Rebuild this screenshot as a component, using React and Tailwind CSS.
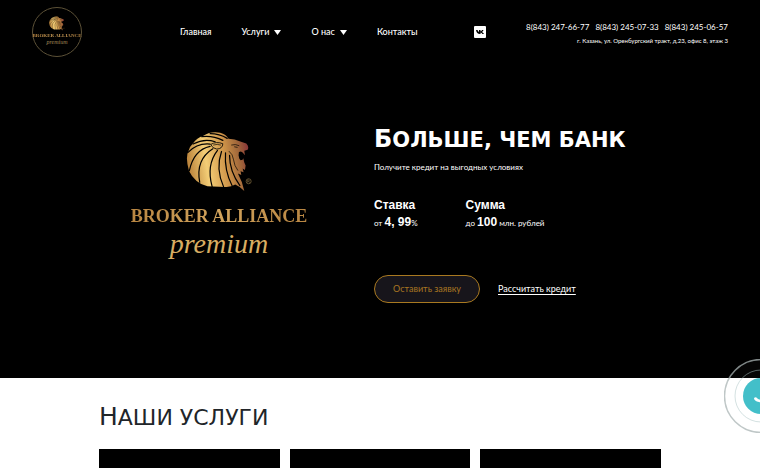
import React from 'react';

function Lion({ className, id }) {
  return (
    <svg className={className} viewBox="16 18 200 182" aria-hidden="true">
      <defs>
        <linearGradient id={id} x1="16" y1="120" x2="204" y2="90" gradientUnits="userSpaceOnUse">
          <stop offset="0" stopColor="#b47b35" />
          <stop offset="0.32" stopColor="#f3cd76" />
          <stop offset="0.62" stopColor="#cf9549" />
          <stop offset="0.85" stopColor="#a0663a" />
          <stop offset="1" stopColor="#8a3838" />
        </linearGradient>
      </defs>
      <path
        fill={`url(#${id})`}
        d="M36 56 Q48 38 68 32 Q90 18 118 23 Q136 28 143 41 Q162 42 178 49 L196 55 Q205 64 200 74 L190 77 L192 90 L185 82 L180 79 L174 81 L173 90 L175 100 L179 105 L185 104 L187 99 L190 112 L194 121 L192 134 L185 130 L188 141 L179 138 L181 149 L171 145 Q184 168 190 197 Q177 184 163 178 Q151 186 133 185 L80 183 Q42 173 25 137 Q13 96 24 76 Q28 63 36 56Z"
      />
      <g fill="none" stroke="#000" strokeWidth="3.6" strokeLinecap="round">
        <path d="M139 40 Q116 26 88 26" />
        <path d="M126 46 Q96 31 63 35" />
        <path d="M103 50 Q70 39 37 57" />
        <path d="M88 57 Q50 53 22 82" />
        <path d="M88 64 Q40 74 26 136" />
        <path d="M96 71 Q44 104 57 171" />
        <path d="M110 76 Q76 120 94 184" />
        <path d="M122 79 Q104 130 128 184" />
        <path d="M134 83 Q130 136 154 182" />
        <path d="M146 91 Q146 138 177 181" />
      </g>
      <path d="M90 58 Q107 48 126 56 Q125 71 108 72 Q94 70 90 58Z" fill={`url(#${id})`} stroke="#000" strokeWidth="2.5" />
      <path d="M97 60 Q110 56 120 60 M151 60 Q164 56 175 62 M160 65 L170 67 M144 78 Q156 87 158 104 Q160 122 171 136" fill="none" stroke="#000" strokeWidth="2" />
      <circle cx="203" cy="168" r="7.5" fill="none" stroke="#8c7343" strokeWidth="2" />
      <path d="M200 172 V164 H204 Q207 167 203 169 H200 M203 169 L207 172" fill="none" stroke="#8c7343" strokeWidth="1.5" />
    </svg>
  );
}

function Arrow() {
  return (
    <svg className="h-[5px] w-[7px]" viewBox="0 0 7 5" aria-hidden="true">
      <path d="M0 0H7L3.5 5Z" fill="#fff" />
    </svg>
  );
}

const navItems = [
  { label: 'Главная' },
  { label: 'Услуги', menu: true },
  { label: 'О нас', menu: true },
  { label: 'Контакты' },
];

const phones = ['8(843) 247-66-77', '8(843) 245-07-33', '8(843) 245-06-57'];

const gold = 'bg-linear-to-r from-[#b98642] via-[#d1a35c] to-[#b98642] bg-clip-text text-transparent';

export default function App() {
  return (
    <div className="font-[Lato,'Open_Sans',sans-serif] text-white">
      <div className="bg-black">
        <header className="flex h-16 items-center px-8">
          <a href="#home" aria-label="Broker Alliance" className="flex size-[50px] shrink-0 flex-col items-center rounded-full border border-[#5c5137] pt-2">
            <Lion id="lion-small" className="h-[15px] w-4" />
            <span className={`font-['Liberation_Serif',serif] text-[5px] leading-[9px] font-bold whitespace-nowrap ${gold}`}>BROKER ALLIANCE</span>
            <span className="font-['Liberation_Serif',serif] text-[6px] leading-[4px] text-[#a58b58] italic">premium</span>
          </a>
          <nav className="ml-[98px] flex gap-[30px] text-[9px] leading-4 font-medium">
            {navItems.map((item) => (
              <a key={item.label} href="#menu" className="flex items-center gap-[5px] whitespace-nowrap">
                {item.label}
                {item.menu && <Arrow />}
              </a>
            ))}
          </nav>
          <a href="#vk" aria-label="VK" className="ml-14 shrink-0">
            <svg className="size-3" viewBox="0 0 12 12">
              <rect width="12" height="12" rx="1" fill="#fff" />
              <path d="M2 4H3.5Q4 5.6 5 6V4H6.5V5.5Q7.5 5 8 4H9.5Q9.3 5.2 8 6Q9.5 6.8 10 8H8.4Q7.7 7 6.5 6.6V8H6Q2.6 8 2 4Z" fill="#000" />
            </svg>
          </a>
          <div className="ml-auto flex flex-col items-end pt-1 whitespace-nowrap">
            <div className="flex gap-[6px] text-[8px] leading-[14px]">
              {phones.map((phone) => (
                <a key={phone} href="#phone">{phone}</a>
              ))}
            </div>
            <p className="text-[6px] leading-[14px]">г. Казань, ул. Оренбургский тракт, д.23, офис 8, этаж 3</p>
          </div>
        </header>

        <section className="mx-auto grid max-w-[562px] grid-cols-[240px_1fr] gap-[35px] pt-[60px] pb-[75px]">
          <div className="flex flex-col items-center pt-[7px]">
            <Lion id="lion-large" className="h-[61px] w-[67px]" />
            <p className={`mt-2 font-['Liberation_Serif',serif] text-[18px] leading-8 font-bold whitespace-nowrap ${gold}`}>BROKER ALLIANCE</p>
            <p className="font-['Liberation_Serif',serif] text-[28px] leading-6 text-[#d8ad62] italic">premium</p>
          </div>
          <div>
            <h1 className="font-['DejaVu_Sans',sans-serif] text-[21px] leading-[30px] font-bold whitespace-nowrap uppercase first-letter:text-[24px]">Больше, чем банк</h1>
            <p className="mt-1 text-[8px] leading-4">Получите кредит на выгодных условиях</p>
            <dl className="mt-[22px] flex gap-12 whitespace-nowrap">
              <div>
                <dt className="font-['Liberation_Sans',sans-serif] text-[12px] leading-[17px] font-bold">Ставка</dt>
                <dd className="text-[8px] leading-[17px]">от <b className="font-['Liberation_Sans',sans-serif] text-[12px]">4, 99</b>%</dd>
              </div>
              <div>
                <dt className="font-['Liberation_Sans',sans-serif] text-[12px] leading-[17px] font-bold">Сумма</dt>
                <dd className="text-[8px] leading-[17px]">до <b className="font-['Liberation_Sans',sans-serif] text-[12px]">100</b> млн. рублей</dd>
              </div>
            </dl>
            <div className="mt-[43px] flex items-center gap-[18px]">
              <button type="button" className="h-7 w-[106px] rounded-full border border-[#a97920] bg-[#17151b] text-[9px] text-[#a87522]">Оставить заявку</button>
              <a href="#calculator" className="text-[9px] underline underline-offset-2">Рассчитать кредит</a>
            </div>
          </div>
        </section>
      </div>

      <section className="mx-auto max-w-[562px] pt-6">
        <h2 className="font-['DejaVu_Sans',sans-serif] text-[22px] leading-[30px] whitespace-nowrap text-[#212529] uppercase first-letter:text-[25px]">Наши услуги</h2>
        <div className="mt-4 grid grid-cols-3 gap-[10px]">
          <div className="h-40 bg-black" />
          <div className="h-40 bg-black" />
          <div className="h-40 bg-black" />
        </div>
      </section>

      <button type="button" aria-label="Заказать звонок" className="fixed top-[359px] -right-[38px] size-[74px]">
        <svg className="size-full" viewBox="0 0 74 74">
          <circle cx="37" cy="37" r="36.5" fill="#fff" fillOpacity="0.02" stroke="#a9b4b4" strokeOpacity="0.75" strokeWidth="1.5" />
          <circle cx="37" cy="37" r="26" fill="none" stroke="#a9c4c4" strokeOpacity="0.5" />
          <circle cx="37" cy="37" r="18" fill="#43bfc9" />
          <path d="M30 39Q32 37 34 40Q38 42 42 38L45 41Q40 46 35 43Q30 42 30 39Z" fill="#fff" />
        </svg>
      </button>
    </div>
  );
}
